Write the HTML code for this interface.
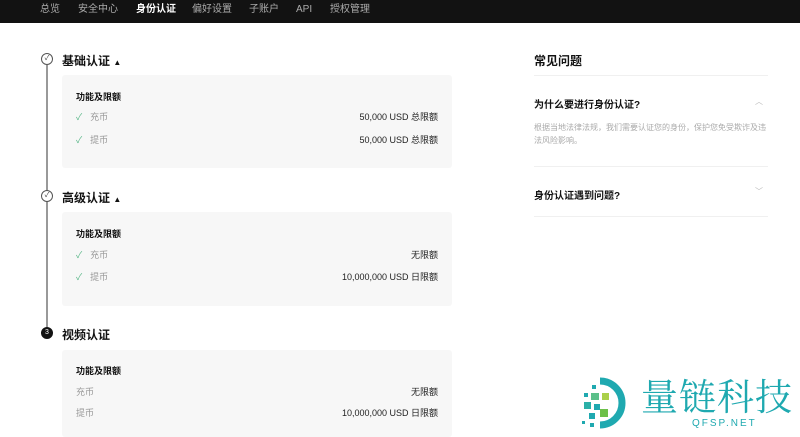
<!DOCTYPE html>
<html><head><meta charset="utf-8"><style>
*{margin:0;padding:0;box-sizing:border-box}
body{width:800px;height:437px;overflow:hidden;background:#fff;font-family:"Liberation Sans","Noto Sans CJK SC",sans-serif;color:#121212;position:relative}
.nav{position:absolute;left:0;top:0;width:800px;height:23px;background:#121212}
.nav span,.nav b{position:absolute;top:0;height:20px;line-height:20px;font-size:10px;color:#aaa}
.nav b{color:#fff}
.a{position:absolute}
.h{font-size:12px;font-weight:bold}
.card{position:absolute;left:62px;width:390px;background:#f7f7f7;border-radius:3px}
.t{font-size:9px;font-weight:bold;position:absolute;left:14px}
.r{position:absolute;left:14px;right:14px;font-size:9px;height:12px}
.r .l{position:absolute;left:0;color:#999}
.r .l i{font-style:normal;color:#5cb88a;margin-right:8px}
.r .v{position:absolute;right:0;color:#222}
.line{position:absolute;left:46px;width:2px;background:#999}
.c{position:absolute;width:12px;height:12px;border-radius:50%;border:1px solid #555;font-size:7px;text-align:center;line-height:10px;color:#333;background:#fff}
.div{position:absolute;left:534px;width:234px;height:1px;background:#f0f0f0}
</style></head><body>
<div class="nav">
<span style="left:40px">总览</span><span style="left:78px">安全中心</span><b style="left:136px">身份认证</b><span style="left:192px">偏好设置</span><span style="left:249px">子账户</span><span style="left:296px">API</span><span style="left:330px">授权管理</span>
</div>
<div class="line" style="top:65px;height:262px"></div>
<div class="c" style="left:41px;top:53px">✓</div>
<div class="a h" style="left:62px;top:52px">基础认证 <span style="font-size:8px">▲</span></div>
<div class="card" style="top:75px;height:93px">
<div class="t" style="top:15px">功能及限额</div>
<div class="r" style="top:35px"><span class="l"><i>✓</i>充币</span><span class="v">50,000 USD 总限额</span></div>
<div class="r" style="top:58px"><span class="l"><i>✓</i>提币</span><span class="v">50,000 USD 总限额</span></div>
</div>
<div class="c" style="left:41px;top:190px">✓</div>
<div class="a h" style="left:62px;top:189px">高级认证 <span style="font-size:8px">▲</span></div>
<div class="card" style="top:212px;height:94px">
<div class="t" style="top:15px">功能及限额</div>
<div class="r" style="top:36px"><span class="l"><i>✓</i>充币</span><span class="v">无限额</span></div>
<div class="r" style="top:58px"><span class="l"><i>✓</i>提币</span><span class="v">10,000,000 USD 日限额</span></div>
</div>
<div class="c" style="left:41px;top:327px;background:#121212;border-color:#121212;color:#fff">3</div>
<div class="a h" style="left:62px;top:326px">视频认证</div>
<div class="card" style="top:350px;height:87px">
<div class="t" style="top:14px">功能及限额</div>
<div class="r" style="top:35px"><span class="l">充币</span><span class="v">无限额</span></div>
<div class="r" style="top:56px"><span class="l">提币</span><span class="v">10,000,000 USD 日限额</span></div>
</div>
<div class="a h" style="left:534px;top:52px">常见问题</div>
<div class="div" style="top:75px"></div>
<div class="a" style="left:534px;top:96px;font-size:10px;font-weight:bold">为什么要进行身份认证?</div>
<div class="a" style="left:755px;top:96px;font-size:8px;color:#bbb">︿</div>
<div class="a" style="left:534px;top:121px;font-size:8px;color:#aaa;width:236px;line-height:13px">根据当地法律法规，我们需要认证您的身份，保护您免受欺诈及违法风险影响。</div>
<div class="div" style="top:166px"></div>
<div class="a" style="left:534px;top:187px;font-size:10px;font-weight:bold">身份认证遇到问题?</div>
<div class="a" style="left:755px;top:186px;font-size:8px;color:#bbb">﹀</div>
<div class="div" style="top:216px"></div>
<svg class="a" style="left:578px;top:375px" width="50" height="55" viewBox="0 0 50 55">
<path d="M22 6 A22 22 0 0 1 22 50" fill="none" stroke="#1fa9b0" stroke-width="7"/>
<rect x="13" y="18" width="8" height="7" fill="#5cc08a"/><rect x="24" y="18" width="7" height="7" fill="#aad04a"/>
<rect x="6" y="27" width="7" height="7" fill="#2bb0a8"/><rect x="16" y="29" width="6" height="6" fill="#1fa9b0"/>
<rect x="22" y="34" width="8" height="8" fill="#6cc04a"/><rect x="11" y="38" width="6" height="6" fill="#1fa9b0"/>
<rect x="14" y="10" width="4" height="4" fill="#1fa9b0"/><rect x="6" y="18" width="4" height="4" fill="#1fa9b0"/>
<rect x="4" y="46" width="3" height="3" fill="#1fa9b0"/><rect x="12" y="48" width="4" height="4" fill="#1fa9b0"/>
</svg>
<div class="a" style="left:641px;top:374px;font-size:37px;line-height:40px;color:#1fa9b0;font-family:'Noto Serif CJK SC',serif;letter-spacing:1px">量链科技</div>
<div class="a" style="left:692px;top:418px;font-size:10px;color:#1fa9b0;letter-spacing:2px">QFSP.NET</div>
</body></html>
